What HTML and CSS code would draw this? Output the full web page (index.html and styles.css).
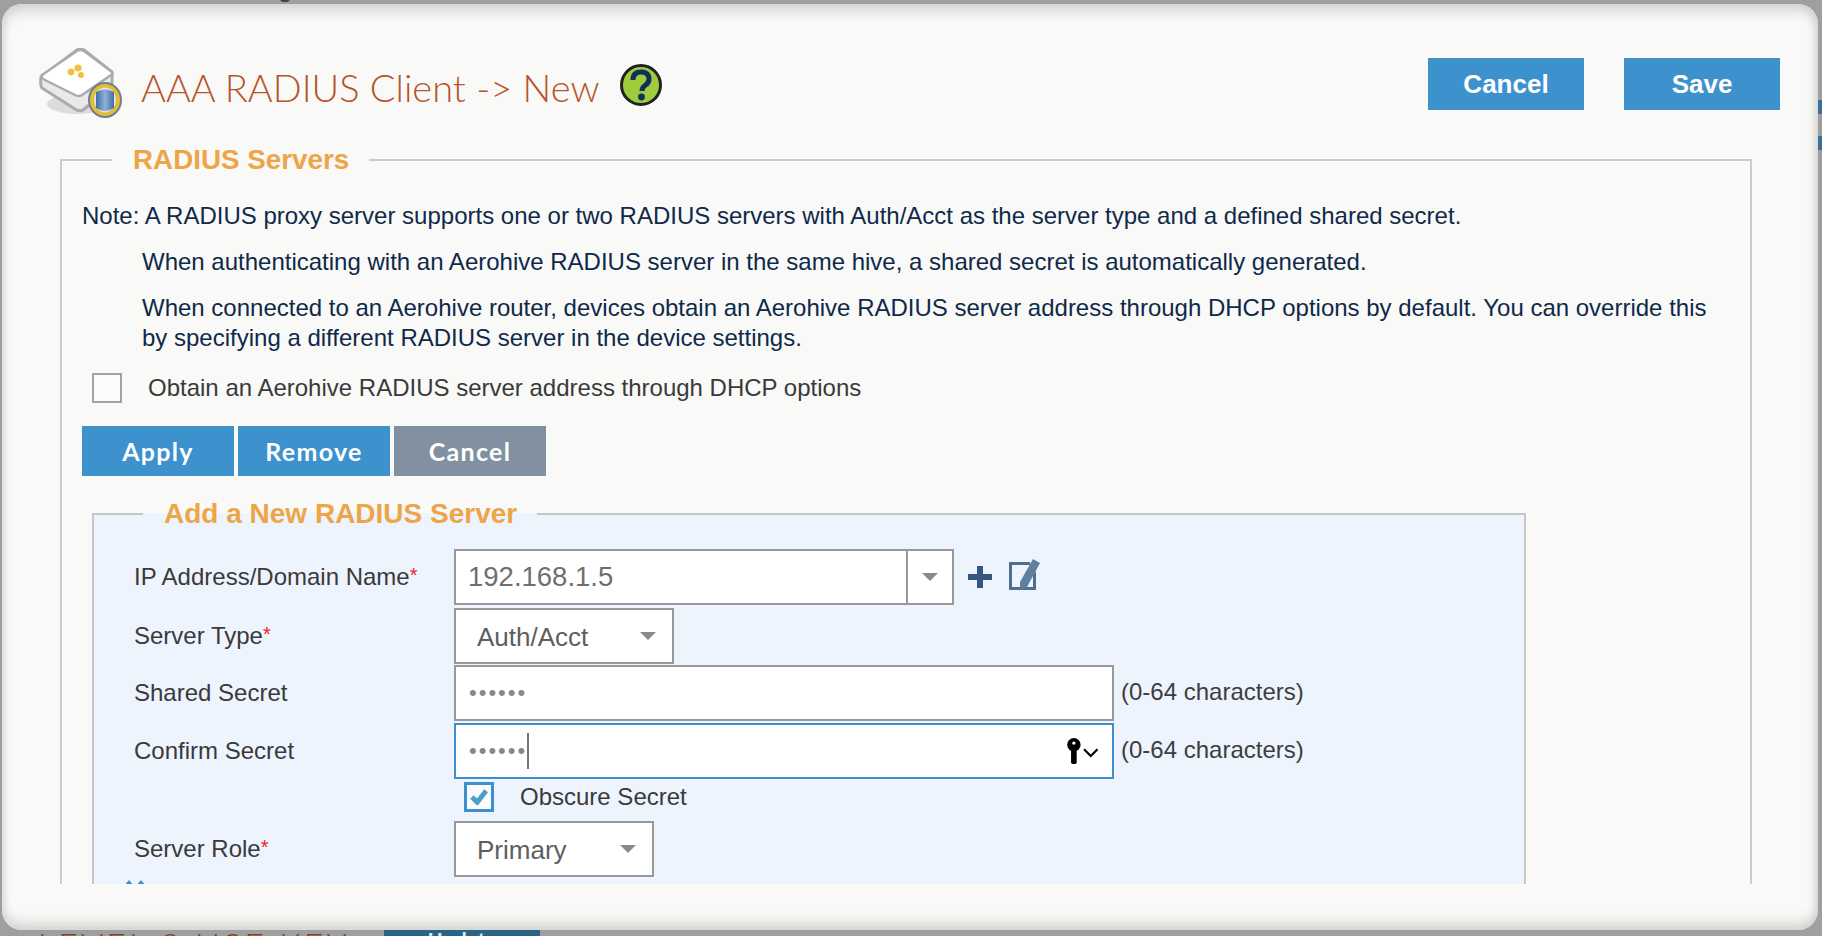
FILE: index.html
```html
<!DOCTYPE html>
<html lang="en">
<head>
<meta charset="utf-8">
<title>AAA RADIUS Client - New</title>
<link rel="stylesheet" href="styles.css">
</head>
<body>
<div class="backdrop" aria-hidden="true">
  <span class="bd-g">g</span>
  <span class="bd-blue bd-r1"></span>
  <span class="bd-blue bd-r2"></span>
  <span class="bd-text">LEVEL 2 USE KEY</span>
  <span class="bd-btn">Update</span>
</div>
<main class="dialog">
  <header class="head">
    <svg class="logo" viewBox="0 0 84 70" width="84" height="70">
      <defs>
        <linearGradient id="db" x1="0" x2="1" y1="0" y2="0"><stop offset="0" stop-color="#3f6ea8"/><stop offset=".5" stop-color="#8fb0d8"/><stop offset="1" stop-color="#3f6ea8"/></linearGradient>
      </defs>
      <ellipse cx="38" cy="56" rx="30" ry="10" fill="#dcdcda"/>
      <path d="M2 29 L38 2 Q41 0 45 2 L73 24 L73 38 L44 62 Q40 64 36 61 L3 40 Q1 38 2 29Z" fill="#e9e9e9" stroke="#a9abad" stroke-width="3" stroke-linejoin="round"/>
      <path d="M3 27 L38 3 Q41 1 45 3 L73 24 Q74 26 72 27 L43 47 Q40 49 36 47 L4 31 Q2 29 3 27Z" fill="#fff" stroke="#a9abad" stroke-width="2.5" stroke-linejoin="round"/>
      <circle cx="32" cy="24" r="3.4" fill="#f2c23d"/><circle cx="39" cy="20" r="3.6" fill="#f2c23d"/><circle cx="42" cy="27" r="3" fill="#f2c23d"/>
      <ellipse cx="66" cy="52" rx="16" ry="17" fill="#e3bd35" stroke="#6f7f92" stroke-width="2"/>
      <ellipse cx="66" cy="52" rx="11" ry="12.5" fill="#dfe3e6"/>
      <path d="M57 44 v16 q9 6 18 0 v-16 q-9 -5 -18 0Z" fill="url(#db)"/>
    </svg>
    <h1 class="title">AAA RADIUS Client -&gt; New</h1>
    <svg class="help" viewBox="0 0 42 42" width="42" height="42">
      <circle cx="21" cy="21" r="19.5" fill="#9fcb3c" stroke="#1c2320" stroke-width="3"/>
      <path d="M13 16 Q13 8 21 8 Q29 8 29 15 Q29 19 25 21.5 Q22 23.5 22 27" fill="none" stroke="#10305c" stroke-width="5"/>
      <circle cx="21.5" cy="33" r="3.4" fill="#10305c"/>
    </svg>
    <div class="head-actions">
      <button class="btn btn-top">Cancel</button>
      <button class="btn btn-top">Save</button>
    </div>
  </header>
  <div class="scroll">
    <fieldset class="group">
      <legend class="legend">RADIUS Servers</legend>
      <p class="note">Note: A RADIUS proxy server supports one or two RADIUS servers with Auth/Acct as the server type and a defined shared secret.</p>
      <p class="note indent">When authenticating with an Aerohive RADIUS server in the same hive, a shared secret is automatically generated.</p>
      <p class="note indent">When connected to an Aerohive router, devices obtain an Aerohive RADIUS server address through DHCP options by default. You can override this by specifying a different RADIUS server in the device settings.</p>
      <div class="dhcp">
        <span class="check"></span>
        <span class="text">Obtain an Aerohive RADIUS server address through DHCP options</span>
      </div>
      <div class="actions">
        <button class="btn btn-sub">Apply</button>
        <button class="btn btn-sub">Remove</button>
        <button class="btn btn-sub btn-muted">Cancel</button>
      </div>
      <fieldset class="sub">
        <legend class="legend sub-legend">Add a New RADIUS Server</legend>
        <div class="row r-ip">
          <label class="lbl">IP Address/Domain Name<em>*</em></label>
          <div class="ctl combo"><span class="val">192.168.1.5</span><span class="combo-btn"><i class="tri"></i></span></div>
          <svg class="plus" viewBox="0 0 24 22" width="24" height="22"><path d="M9 0h6v8h9v6h-9v8H9v-8H0V8h9z" fill="#35577f"/></svg>
          <svg class="edit" viewBox="0 0 32 32" width="32" height="32">
            <path d="M1 4h21v3H4v22h21V17l3-4v19H1z" fill="#4f6f8f" transform="translate(0 -1)"/>
            <path d="M25 0l7 4-13 24-7 3 0-8z" fill="#5f7f9f"/>
          </svg>
        </div>
        <div class="row r-type">
          <label class="lbl">Server Type<em>*</em></label>
          <div class="ctl sel sel-type"><span>Auth/Acct</span><i class="tri"></i></div>
        </div>
        <div class="row r-secret">
          <label class="lbl">Shared Secret</label>
          <div class="ctl pass"><span class="dots">••••••</span></div>
          <span class="hint">(0-64 characters)</span>
        </div>
        <div class="row r-confirm">
          <label class="lbl">Confirm Secret</label>
          <div class="ctl pass focus"><span class="dots">••••••</span><span class="caret"></span>
            <svg class="key" viewBox="0 0 32 24" width="36" height="27">
              <circle cx="7" cy="6" r="6" fill="#000"/><rect x="4.5" y="8" width="5" height="15" rx="1.5" fill="#000"/><circle cx="7" cy="4.5" r="1.5" fill="#fff"/>
              <path d="M16 10l6 6 6-6" fill="none" stroke="#000" stroke-width="2"/>
            </svg>
          </div>
          <span class="hint">(0-64 characters)</span>
        </div>
        <div class="row r-obscure">
          <span class="check on"><svg viewBox="0 0 20 18" width="18" height="16"><path d="M2 9l6 6L18 2" fill="none" stroke="#4a9fd0" stroke-width="5.5"/></svg></span>
          <span class="text obscure">Obscure Secret</span>
        </div>
        <div class="row r-role">
          <label class="lbl">Server Role<em>*</em></label>
          <div class="ctl sel sel-role"><span>Primary</span><i class="tri"></i></div>
        </div>
        <svg class="chev" viewBox="0 0 22 6" width="22" height="6"><path d="M0 6L5 0l5 6zM12 6l5-6 5 6z" fill="#3d90ce"/></svg>
      </fieldset>
    </fieldset>
  </div>
</main>
</body>
</html>
```

FILE: styles.css
```css
* { box-sizing: border-box; }
html, body { height: 100%; }
body {
  margin: 0;
  height: 936px;
  overflow: hidden;
  background: #9f9f9f;
  padding: 4px 4px 6px 2px;
  position: relative;
  font-family: "Liberation Sans", Arial, sans-serif;
  color: #3a3a3a;
}
.backdrop { position: absolute; inset: 0; overflow: hidden; }
.backdrop span { position: absolute; }
.bd-g { left: 278px; top: -27px; font-size: 26px; color: #444; }
.bd-blue { left: 1818px; width: 4px; height: 14px; background: #3a6f9c; }
.bd-r1 { top: 100px; }
.bd-r2 { top: 136px; }
.bd-text { left: 38px; top: 925px; font: 300 34px/40px "Lato", sans-serif; color: #8e3d1f; letter-spacing: 3px; }
.bd-btn { left: 384px; top: 930px; width: 156px; height: 10px; background: #2a6288; color: #d8e8f2; font: bold 20px/20px "Liberation Sans", sans-serif; text-align: center; }

.dialog {
  position: relative;
  height: 926px;
  border-radius: 20px;
  background: #f9f9f7;
  box-shadow: inset 0 14px 14px -8px #cfcfcd, inset 8px 0 10px -6px #dadad8, inset -8px 0 10px -6px #cfcfcd, inset 0 -14px 14px -8px #d0d0ce;
  display: flex;
  flex-direction: column;
  overflow: hidden;
}
.head {
  display: flex;
  align-items: center;
  height: 140px;
  padding: 20px 38px 0 37px;
  flex: none;
}
.logo { margin: 2px 0 4px 0; flex: none; }
.title {
  margin: 5px 0 0 18px;
  font: 300 38px/44px "Lato", sans-serif;
  color: #b8532a;
  white-space: nowrap;
}
.help { margin: 2px 0 0 21px; }
.head-actions { margin-left: auto; display: flex; gap: 40px; }
.btn { border: 0; color: #fff; background: #3d91cc; padding: 0; cursor: pointer; }
.btn-top { width: 156px; height: 52px; font: bold 26px "Liberation Sans", sans-serif; }
.btn-sub { width: 152px; height: 50px; font: 700 25px "Lato", sans-serif; letter-spacing: 1.3px; }
.btn-muted { background: #8291a1; }

.scroll { flex: none; height: 740px; overflow: hidden; padding: 0 0 0 58px; }
.group {
  width: 1692px;
  margin: 0;
  padding: 0 20px 0 20px;
  border: 2px solid #cbcbc9;
  min-inline-size: 0;
}
.legend {
  margin-left: 30px;
  padding: 0 20px 0 21px;
  font: bold 27.8px/32px "Liberation Sans", sans-serif;
  color: #eda548;
}
.note {
  margin: 0;
  font-size: 24px;
  line-height: 30px;
  color: #10294a;
}
.group > .note:first-of-type { margin-top: 25px; }
.indent { margin: 16px 0 0 60px; }
.dhcp { display: flex; align-items: center; margin: 20px 0 0 10px; }
.check {
  width: 30px; height: 30px; flex: none;
  border: 2px solid #a3a3a3; background: #fbfbfb;
  display: flex; align-items: center; justify-content: center;
}
.check.on { border: 3px solid #3d90ce; }
.text { font-size: 24px; color: #3a3a3a; margin-left: 26px; white-space: nowrap; }
.actions { display: flex; gap: 4px; margin-top: 23px; }

.sub {
  width: 1434px;
  margin: 22px 0 0 10px;
  padding: 19px 0 60px 0;
  border: 2px solid #c6c6c6;
  background: #edf4fe;
  min-inline-size: 0;
}
.sub-legend { margin-left: 49px; font-size: 28px; }
.row { display: flex; align-items: center; }
.lbl { width: 360px; padding-left: 40px; flex: none; font-size: 24px; color: #3a3a3a; white-space: nowrap; }
.lbl em { color: #e22; font-style: normal; font-size: 20px; vertical-align: 3px; }
.ctl {
  height: 56px;
  border: 2px solid #999;
  background: #fff;
  display: flex;
  align-items: center;
  flex: none;
}
.combo { width: 500px; }
.val { flex: 1; padding-left: 12px; font-size: 27.5px; color: #6f6f6f; }
.combo-btn { width: 46px; height: 100%; border-left: 2px solid #999; display: flex; align-items: center; justify-content: center; }
.tri { width: 0; height: 0; border: 8px solid transparent; border-top: 8px solid #8a8a8a; border-bottom: 0; display: block; }
.plus { margin-left: 14px; }
.edit { margin: -4px 0 0 16px; }
.r-type { margin-top: 3px; }
.r-secret { margin-top: 1px; }
.r-confirm { margin-top: 2px; }
.sel { font-size: 26px; color: #5e5e5e; padding: 0 16px 0 21px; justify-content: space-between; }
.sel span { padding-top: 2px; }
.sel-type { width: 220px; }
.sel-role { width: 200px; }
.pass { width: 660px; padding-left: 13px; }
.dots { font-size: 22px; letter-spacing: 2px; color: #888; }
.focus { border-color: #3d90ce; }
.caret { width: 2px; height: 36px; background: #777; }
.key { margin-left: auto; margin-right: 10px; }
.hint { margin-left: 7px; font-size: 24px; color: #3e3e3e; white-space: nowrap; transform: translateY(-1px); }
.r-obscure { margin: 3px 0 0 370px; }
.obscure { margin-left: 26px; }
.r-role { margin-top: 9px; }
.chev { display: block; margin: 3px 0 0 30px; }
```
